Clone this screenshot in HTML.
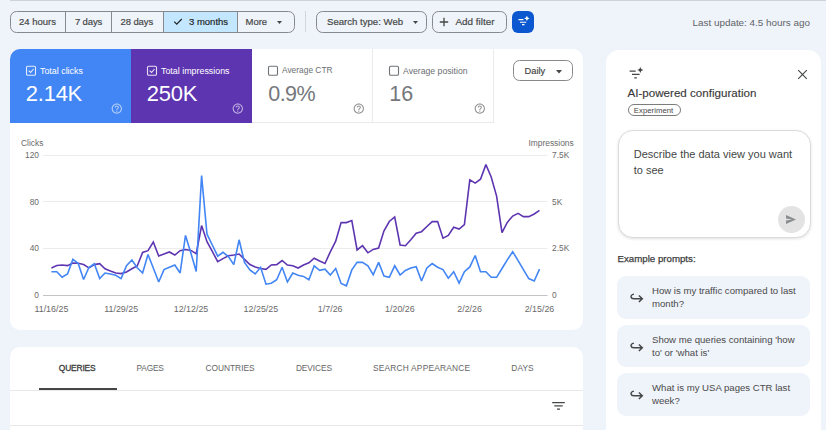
<!DOCTYPE html>
<html><head><meta charset="utf-8">
<style>
*{box-sizing:border-box;margin:0;padding:0}
html,body{width:826px;height:430px;overflow:hidden;background:#eff3fa;font-family:"Liberation Sans",sans-serif;color:#444746}
body{position:relative}
.a{position:absolute;white-space:nowrap}
.t{position:absolute;white-space:nowrap;line-height:1}
.tb{-webkit-text-stroke:0.18px currentColor}
.grp{position:absolute;left:10px;top:11px;width:285px;height:22px;border:1px solid #878a8c;border-radius:6.5px;overflow:hidden}
.grp .s{position:absolute;top:0;height:20px}
.grp .d{border-left:1px solid #878a8c}
.btn{position:absolute;top:11px;height:22px;border:1px solid #878a8c;border-radius:6.5px}
.card{position:absolute;background:#fff}
.kpi{position:absolute;top:49px;height:73.5px}
.ax{position:absolute;white-space:nowrap;line-height:1;font-size:8.4px;color:#6a6a6a}
.tab{position:absolute;white-space:nowrap;line-height:1;top:363.5px;font-size:8.4px;color:#666}
.pc{position:absolute;left:617px;width:193px;border-radius:9px;background:#eff3fa}
.pc .x{position:absolute;left:35px;top:8.8px;font-size:9.6px;line-height:12.9px;color:#4a4a4a;width:152px;white-space:normal}
.pc svg{position:absolute;left:12.5px;top:17px}
</style></head><body>
<div class="a" style="left:10px;top:0;width:816px;height:1px;background:#d0d3d6"></div>

<div class="grp">
  <div class="s" style="left:0;width:55px"></div>
  <div class="s d" style="left:54px;width:47px"></div>
  <div class="s d" style="left:100px;width:53px"></div>
  <div class="s d" style="left:152px;width:74px;background:#c2e7ff"></div>
  <div class="s d" style="left:226px;width:58px"></div>
</div>
<div class="t tb" style="left:19px;top:17px;font-size:9.5px">24 hours</div>
<div class="t tb" style="left:75px;top:17px;font-size:9.5px;letter-spacing:-0.15px">7 days</div>
<div class="t tb" style="left:120.5px;top:17px;font-size:9.5px;letter-spacing:-0.1px">28 days</div>
<svg class="a" style="left:172.7px;top:17.3px" width="10" height="9" viewBox="0 0 10 9"><path d="M1.2 4.6 L3.7 7.1 L8.8 2" fill="none" stroke="#1f1f1f" stroke-width="1.15"/></svg>
<div class="t tb" style="left:189px;top:17px;font-size:9.5px;color:#1f1f1f">3 months</div>
<div class="t tb" style="left:245.5px;top:17px;font-size:9.5px">More</div>
<svg class="a" style="left:277px;top:21px" width="5" height="3" viewBox="0 0 5 3"><path d="M0 0 L5 0 L2.5 3Z" fill="#444746"/></svg>

<div class="a" style="left:305px;top:11px;width:1px;height:21px;background:#d3d6d8"></div>
<div class="btn" style="left:316px;width:111px"></div>
<div class="t tb" style="left:327px;top:17px;font-size:9.6px">Search type: Web</div>
<svg class="a" style="left:413px;top:21px" width="5" height="3" viewBox="0 0 5 3"><path d="M0 0 L5 0 L2.5 3Z" fill="#444746"/></svg>
<div class="btn" style="left:432px;width:75px"></div>
<svg class="a" style="left:439px;top:17px" width="10" height="10" viewBox="0 0 10 10"><path d="M5 0.8V9.2M0.8 5H9.2" stroke="#444746" stroke-width="1.3" fill="none"/></svg>
<div class="t tb" style="left:455.5px;top:17px;font-size:9.9px">Add filter</div>
<div class="a" style="left:512px;top:11px;width:22px;height:22px;border-radius:6px;background:#0b57d0"></div>
<svg class="a" style="left:512px;top:11px" width="22" height="22" viewBox="0 0 22 22">
<g stroke="#fff" stroke-width="1.1" fill="none"><path d="M6.5 8.6H11.4M8 11.2H14.2M10 13.6H12.5"/></g>
<path d="M14.9 4.7 Q15.3 7 17.6 7.4 Q15.3 7.8 14.9 10.1 Q14.5 7.8 12.2 7.4 Q14.5 7 14.9 4.7Z" fill="#fff"/>
</svg>
<div class="t" style="left:692.5px;top:18px;font-size:9.9px;color:#5f6368">Last update: 4.5 hours ago</div>

<!-- main chart card -->
<div class="card" style="left:10px;top:49px;width:573px;height:281px;border-radius:10px"></div>
<div class="kpi" style="left:10px;width:121px;background:#4285f4;border-top-left-radius:10px"></div>
<div class="kpi" style="left:131px;width:121px;background:#5e35b1"></div>
<div class="kpi" style="left:252px;width:121px;border-right:1px solid #ebebeb;border-bottom:1px solid #ebebeb"></div>
<div class="kpi" style="left:373px;width:121px;border-right:1px solid #ebebeb;border-bottom:1px solid #ebebeb"></div>
<svg class="a" style="left:0;top:0" width="826" height="130" viewBox="0 0 826 130">
<g fill="none" stroke="#fff" stroke-opacity="0.85" stroke-width="1.1">
<rect x="26.5" y="66.3" width="9" height="9" rx="1.3"/><path d="M28.6 70.6 L30.6 72.4 L33.6 69"/>
<rect x="147.5" y="66.3" width="9" height="9" rx="1.3"/><path d="M149.6 70.6 L151.6 72.4 L154.6 69"/>
</g>
<g fill="none" stroke="#6f7377" stroke-width="1.1">
<rect x="268.5" y="66.3" width="9" height="9" rx="1.3"/>
<rect x="389.5" y="66.3" width="9" height="9" rx="1.3"/>
</g>
<path transform="translate(110.62,102.42) scale(0.515)" d="M11 18h2v-2h-2v2zm1-16C6.48 2 2 6.48 2 12s4.48 10 10 10 10-4.48 10-10S17.52 2 12 2zm0 18c-4.41 0-8-3.59-8-8s3.59-8 8-8 8 3.59 8 8-3.59 8-8 8zm0-14c-2.21 0-4 1.79-4 4h2c0-1.1.9-2 2-2s2 .9 2 2c0 2-3 1.75-3 5h2c0-2.25 3-2.5 3-5 0-2.21-1.79-4-4-4z" fill="#fff" fill-opacity="0.62"/>
<path transform="translate(231.62,102.42) scale(0.515)" d="M11 18h2v-2h-2v2zm1-16C6.48 2 2 6.48 2 12s4.48 10 10 10 10-4.48 10-10S17.52 2 12 2zm0 18c-4.41 0-8-3.59-8-8s3.59-8 8-8 8 3.59 8 8-3.59 8-8 8zm0-14c-2.21 0-4 1.79-4 4h2c0-1.1.9-2 2-2s2 .9 2 2c0 2-3 1.75-3 5h2c0-2.25 3-2.5 3-5 0-2.21-1.79-4-4-4z" fill="#fff" fill-opacity="0.62"/>
<path transform="translate(352.62,102.42) scale(0.515)" d="M11 18h2v-2h-2v2zm1-16C6.48 2 2 6.48 2 12s4.48 10 10 10 10-4.48 10-10S17.52 2 12 2zm0 18c-4.41 0-8-3.59-8-8s3.59-8 8-8 8 3.59 8 8-3.59 8-8 8zm0-14c-2.21 0-4 1.79-4 4h2c0-1.1.9-2 2-2s2 .9 2 2c0 2-3 1.75-3 5h2c0-2.25 3-2.5 3-5 0-2.21-1.79-4-4-4z" fill="#8f8f8f" fill-opacity="1"/>
<path transform="translate(473.62,102.42) scale(0.515)" d="M11 18h2v-2h-2v2zm1-16C6.48 2 2 6.48 2 12s4.48 10 10 10 10-4.48 10-10S17.52 2 12 2zm0 18c-4.41 0-8-3.59-8-8s3.59-8 8-8 8 3.59 8 8-3.59 8-8 8zm0-14c-2.21 0-4 1.79-4 4h2c0-1.1.9-2 2-2s2 .9 2 2c0 2-3 1.75-3 5h2c0-2.25 3-2.5 3-5 0-2.21-1.79-4-4-4z" fill="#8f8f8f" fill-opacity="1"/>
</svg>
<div class="t" style="left:40px;top:67px;font-size:8.9px;color:#fff">Total clicks</div>
<div class="t" style="left:161px;top:67px;font-size:8.9px;color:#fff">Total impressions</div>
<div class="t" style="left:282px;top:66px;font-size:8.4px;color:#6b6f73">Average CTR</div>
<div class="t" style="left:403px;top:67px;font-size:8.7px;color:#6b6f73">Average position</div>
<div class="t" style="left:25.8px;top:82.5px;font-size:22px;letter-spacing:-0.25px;color:#fff">2.14K</div>
<div class="t" style="left:146.8px;top:82.5px;font-size:22px;letter-spacing:-0.25px;color:#fff">250K</div>
<div class="t" style="left:268.3px;top:83.5px;font-size:21.5px;letter-spacing:-0.6px;color:#74777b">0.9%</div>
<div class="t" style="left:389.3px;top:83.5px;font-size:21.5px;color:#74777b">16</div>
<div class="btn" style="left:513px;top:60px;width:60px;height:21px"></div>
<div class="t tb" style="left:524.5px;top:67px;font-size:9.3px;color:#444746">Daily</div>
<svg class="a" style="left:556px;top:70px" width="6" height="3.5" viewBox="0 0 6 3.5"><path d="M0 0 L6 0 L3 3.5Z" fill="#444746"/></svg>

<svg class="a" style="left:0;top:0" width="826" height="430" viewBox="0 0 826 430">
<g stroke="#ececec" stroke-width="1">
<line x1="43" y1="155.5" x2="547.5" y2="155.5"/>
<line x1="43" y1="201.5" x2="547.5" y2="201.5"/>
<line x1="43" y1="248.5" x2="547.5" y2="248.5"/>
</g>
<line x1="43" y1="295.5" x2="547.5" y2="295.5" stroke="#c4c4c4" stroke-width="1.2"/>
<polyline fill="none" stroke="#5e35b1" stroke-width="1.6" stroke-linejoin="miter" stroke-miterlimit="2.5" points="51.4,267.9 56.8,265.5 62.1,265.0 67.5,265.6 72.9,263.0 78.2,263.2 83.6,264.6 88.9,267.9 94.3,264.6 99.7,263.7 105.0,268.8 110.4,271.0 115.8,273.0 121.1,273.6 126.5,272.0 131.9,268.8 137.2,266.0 142.6,252.5 148.0,250.7 153.3,242.0 158.7,256.0 164.0,254.0 169.4,252.0 174.8,255.0 180.1,250.7 185.5,249.5 190.9,250.4 196.2,253.7 201.6,225.6 207.0,241.7 212.3,251.4 217.7,261.6 223.0,258.6 228.4,255.8 233.8,255.0 239.1,254.0 244.5,259.4 249.9,264.6 255.2,267.0 260.6,268.5 266.0,269.3 271.3,265.0 276.7,264.6 282.1,260.5 287.4,265.0 292.8,265.8 298.1,268.0 303.5,265.0 308.9,262.8 314.2,258.2 319.6,261.0 325.0,263.5 330.3,251.8 335.7,241.2 341.1,222.6 346.4,222.6 351.8,220.6 357.1,250.0 362.5,245.7 367.9,252.8 373.2,249.4 378.6,248.1 384.0,230.8 389.3,221.5 394.7,217.0 400.1,245.0 405.4,245.7 410.8,239.7 416.2,233.2 421.5,231.7 426.9,226.5 432.2,221.6 437.6,221.6 443.0,238.2 448.3,235.5 453.7,227.3 459.1,229.0 464.4,224.6 469.8,179.9 475.2,183.1 480.5,179.2 485.9,164.6 491.2,177.0 496.6,196.1 502.0,232.7 507.3,222.4 512.7,216.1 518.1,213.4 523.4,216.6 528.8,216.6 534.2,214.0 539.5,210.4"/>
<polyline fill="none" stroke="#4285f4" stroke-width="1.6" stroke-linejoin="miter" stroke-miterlimit="2.5" points="51.4,271.8 56.8,271.8 62.1,277.3 67.5,274.0 72.9,259.4 78.2,263.4 83.6,279.5 88.9,267.5 94.3,263.8 99.7,278.5 105.0,273.0 110.4,274.0 115.8,275.3 121.1,278.6 126.5,265.8 131.9,260.0 137.2,267.8 142.6,273.0 148.0,254.5 153.3,268.0 158.7,282.0 164.0,269.6 169.4,267.3 174.8,265.0 180.1,273.0 185.5,235.4 190.9,253.0 196.2,271.5 201.6,175.6 207.0,234.2 212.3,245.0 217.7,256.2 223.0,252.3 228.4,256.5 233.8,264.6 239.1,239.8 244.5,262.5 249.9,270.0 255.2,274.0 260.6,267.3 266.0,284.2 271.3,283.2 276.7,279.7 282.1,267.3 287.4,282.0 292.8,273.0 298.1,275.2 303.5,276.4 308.9,279.7 314.2,265.8 319.6,270.3 325.0,269.1 330.3,275.0 335.7,268.6 341.1,283.4 346.4,285.8 351.8,269.9 357.1,262.4 362.5,262.4 367.9,265.8 373.2,274.7 378.6,262.4 384.0,276.0 389.3,277.3 394.7,265.8 400.1,275.0 405.4,270.4 410.8,268.0 416.2,266.7 421.5,281.0 426.9,268.0 432.2,263.6 437.6,267.2 443.0,269.6 448.3,278.2 453.7,271.7 459.1,283.1 464.4,271.7 469.8,266.9 475.2,255.5 480.5,271.7 485.9,271.7 491.2,277.3 496.6,277.3 502.0,268.5 507.3,259.9 512.7,251.7 518.1,260.7 523.4,269.6 528.8,278.6 534.2,281.0 539.5,269.1"/>
</svg>
<div class="ax" style="left:21px;top:139px">Clicks</div>
<div class="ax" style="left:528.5px;top:139px">Impressions</div>
<div class="ax" style="left:0;width:39px;text-align:right;top:151px">120</div>
<div class="ax" style="left:0;width:39px;text-align:right;top:198px">80</div>
<div class="ax" style="left:0;width:39px;text-align:right;top:244px">40</div>
<div class="ax" style="left:0;width:39px;text-align:right;top:291px">0</div>
<div class="ax" style="left:552px;top:151px">7.5K</div>
<div class="ax" style="left:552px;top:198px">5K</div>
<div class="ax" style="left:552px;top:244px">2.5K</div>
<div class="ax" style="left:552px;top:291px">0</div>
<div class="ax" style="left:11.4px;width:80px;text-align:center;top:305px;font-size:8.9px">11/16/25</div>
<div class="ax" style="left:81.2px;width:80px;text-align:center;top:305px;font-size:8.9px">11/29/25</div>
<div class="ax" style="left:151px;width:80px;text-align:center;top:305px;font-size:8.9px">12/12/25</div>
<div class="ax" style="left:220.9px;width:80px;text-align:center;top:305px;font-size:8.9px">12/25/25</div>
<div class="ax" style="left:290.2px;width:80px;text-align:center;top:305px;font-size:8.9px">1/7/26</div>
<div class="ax" style="left:359.9px;width:80px;text-align:center;top:305px;font-size:8.9px">1/20/26</div>
<div class="ax" style="left:429.6px;width:80px;text-align:center;top:305px;font-size:8.9px">2/2/26</div>
<div class="ax" style="left:499.5px;width:80px;text-align:center;top:305px;font-size:8.9px">2/15/26</div>

<!-- table card -->
<div class="card" style="left:10px;top:347px;width:573px;height:100px;border-radius:10px"></div>
<div class="a" style="left:10px;top:390px;width:573px;height:1px;background:#e8e8e8"></div>
<div class="a" style="left:39px;top:388px;width:78px;height:2px;background:#444746"></div>
<div class="a" style="left:10px;top:425px;width:573px;height:1px;background:#e8e8e8"></div>
<div class="tab" style="left:58.8px;letter-spacing:-0.15px;-webkit-text-stroke:0.3px #3a3a3a;color:#3a3a3a">QUERIES</div>
<div class="tab" style="left:136.5px;letter-spacing:-0.2px">PAGES</div>
<div class="tab" style="left:205.5px;letter-spacing:-0.03px">COUNTRIES</div>
<div class="tab" style="left:295.9px;letter-spacing:-0.1px">DEVICES</div>
<div class="tab" style="left:372.9px;letter-spacing:0.2px">SEARCH APPEARANCE</div>
<div class="tab" style="left:511.3px;letter-spacing:0.05px">DAYS</div>
<svg class="a" style="left:550px;top:399px" width="16" height="12" viewBox="0 0 16 12"><g stroke="#444746" stroke-width="1.3"><path d="M2.2 3.6H14.8M4.3 6.9H12.7M7 10.1H10"/></g></svg>

<!-- right panel -->
<div class="card" style="left:606px;top:50.3px;width:215px;height:400px;border-radius:13px"></div>
<svg class="a" style="left:627px;top:66px" width="18" height="14" viewBox="0 0 18 14">
<g stroke="#444746" stroke-width="1.3"><path d="M2.6 5.2H8.7M5 8.4H12.6M7.3 11.9H9.8"/></g>
<path d="M13.3 1.1 Q13.7 3.7 16.3 4.1 Q13.7 4.5 13.3 7.1 Q12.9 4.5 10.3 4.1 Q12.9 3.7 13.3 1.1Z" fill="#444746"/>
</svg>
<svg class="a" style="left:797px;top:69px" width="11" height="11" viewBox="0 0 11 11"><path d="M1.2 1.2L9.8 9.8M9.8 1.2L1.2 9.8" stroke="#444746" stroke-width="1.15"/></svg>
<div class="t" style="left:627.5px;top:86.7px;font-size:11.6px;color:#3a3a3a;-webkit-text-stroke:0.15px #3a3a3a">AI-powered configuration</div>
<div class="a" style="left:627.5px;top:104px;width:53px;height:12.3px;border:1px solid #7c7c7c;border-radius:6.2px"></div>
<div class="t" style="left:633.8px;top:106.5px;font-size:7.8px;color:#474747">Experiment</div>
<div class="a" style="left:617.5px;top:129.5px;width:193px;height:108.5px;border:1px solid #d9dcdf;border-radius:15px;background:#fff;box-shadow:0 1px 3px rgba(0,0,0,0.13)"></div>
<div class="a" style="left:633.7px;top:147px;width:170px;font-size:11px;line-height:15.7px;color:#444746;white-space:normal">Describe the data view you want to see</div>
<div class="a" style="left:777.5px;top:206px;width:27px;height:27px;border-radius:50%;background:#e3e3e3"></div>
<svg class="a" style="left:785px;top:214px" width="12" height="11" viewBox="0 0 12 11"><path d="M1 1 L11 5.5 L1 10 L1 6.6 L7 5.5 L1 4.4Z" fill="#8a8d90"/></svg>
<div class="t" style="left:617.5px;top:254px;font-size:9.7px;color:#3c3c3c;-webkit-text-stroke:0.25px #3c3c3c">Example prompts:</div>
<div class="pc" style="top:276.4px;height:42.4px"><svg width="14" height="11" viewBox="0 0 14 11"><path d="M4 1.1 C1.4 1.4 0.9 3.2 1.1 3.9 C1.3 5.2 2.4 5.8 4 5.8 H12.2 M8.9 2.5 L12.3 5.8 L8.9 9.1" fill="none" stroke="#444746" stroke-width="1.45"/></svg><div class="x">How is my traffic compared to last month?</div></div>
<div class="pc" style="top:324.9px;height:42.2px"><svg width="14" height="11" viewBox="0 0 14 11"><path d="M4 1.1 C1.4 1.4 0.9 3.2 1.1 3.9 C1.3 5.2 2.4 5.8 4 5.8 H12.2 M8.9 2.5 L12.3 5.8 L8.9 9.1" fill="none" stroke="#444746" stroke-width="1.45"/></svg><div class="x">Show me queries containing 'how to' or 'what is'</div></div>
<div class="pc" style="top:373px;height:42.8px"><svg width="14" height="11" viewBox="0 0 14 11"><path d="M4 1.1 C1.4 1.4 0.9 3.2 1.1 3.9 C1.3 5.2 2.4 5.8 4 5.8 H12.2 M8.9 2.5 L12.3 5.8 L8.9 9.1" fill="none" stroke="#444746" stroke-width="1.45"/></svg><div class="x">What is my USA pages CTR last week?</div></div>
</body></html>
